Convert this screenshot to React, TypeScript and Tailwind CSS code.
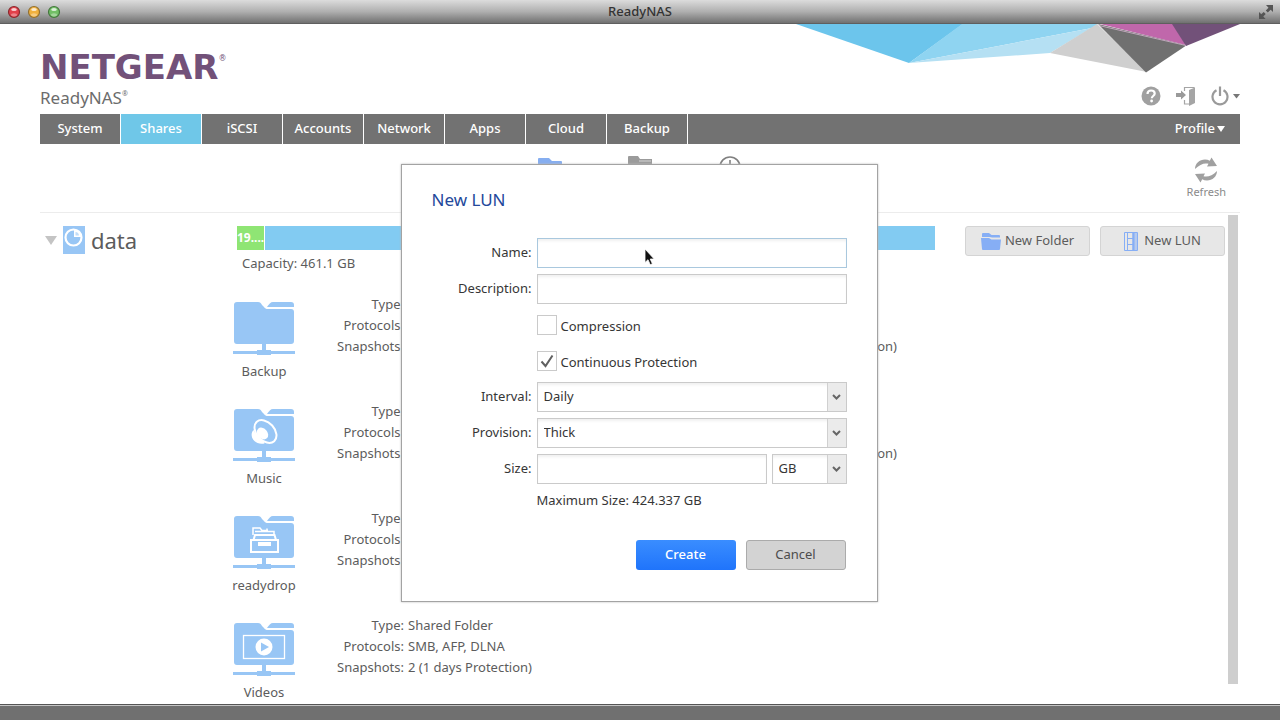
import React, { useState } from 'react';

type Share = {
  name?: string;
  kind: 'plain' | 'music' | 'drop' | 'video';
  type: string;
  protocols: string;
  snapshots: string;
};

const tabs = ['System', 'Shares', 'iSCSI', 'Accounts', 'Network', 'Apps', 'Cloud', 'Backup'];

// Filled row by row, null keeps the cell empty
const shares: (Share | null)[] = [
  { name: 'Backup', kind: 'plain', type: 'Shared Folder', protocols: 'SMB, AFP', snapshots: 'None' },
  { kind: 'plain', type: 'Shared Folder', protocols: 'SMB, AFP', snapshots: '2 (1 days Protection)' },
  { name: 'Music', kind: 'music', type: 'Shared Folder', protocols: 'SMB', snapshots: 'None' },
  { kind: 'plain', type: 'Shared Folder', protocols: 'SMB, AFP', snapshots: '2 (1 days Protection)' },
  { name: 'readydrop', kind: 'drop', type: 'Shared Folder', protocols: 'SMB, AFP', snapshots: 'None' },
  null,
  { name: 'Videos', kind: 'video', type: 'Shared Folder', protocols: 'SMB, AFP, DLNA', snapshots: '2 (1 days Protection)' },
];

function TrafficLight({ color, rim }: { color: string; rim: string }) {
  return (
    <svg width="14" height="14" viewBox="0 0 14 14">
      <circle cx="7" cy="7" r="5.5" fill={color} stroke={rim} strokeWidth="1.2" />
      <ellipse cx="7" cy="4.4" rx="2.8" ry="1.5" fill="#fff" opacity="0.75" />
      <ellipse cx="7" cy="9.8" rx="3" ry="1.6" fill="#fff" opacity="0.35" />
    </svg>
  );
}

function Banner() {
  return (
    <svg className="absolute top-0 right-10" width="444" height="49" viewBox="796 24 444 49">
      <polygon points="796,24 963,24 909,63" fill="#6cc5ec" />
      <polygon points="962,24 1098,24 1092,28 909,63" fill="#8fd4f1" />
      <polygon points="909,63 1092,28 1098,24 1050,53" fill="#b5e0f3" />
      <polygon points="1097,24 1050,53 1147,72" fill="#cfcfcf" />
      <polygon points="1098,24 1187,45 1146,72.5" fill="#707070" />
      <polygon points="1100,24 1173,24 1186,45" fill="#c067ab" />
      <polygon points="1172,24 1240,24 1186,46" fill="#725179" />
      <path d="M1099 25.500L1186 45.500" stroke="#e3bfdc" strokeWidth="0.700" />
    </svg>
  );
}

function ShareIcon({ kind }: { kind: Share['kind'] }) {
  return (
    <svg width="62" height="53" viewBox="0 0 62 53">
      <path d="M4 0h21c2 0 3 1 4 3l2 2c1 1.500 2 2 4 2h23a3 3 0 0 1 3 3v29a3 3 0 0 1-3 3H4a3 3 0 0 1-3-3V3a3 3 0 0 1 3-3z" fill="#98c6f5" />
      <path d="M34 5c2-3 3.500-5 6-5h18c2 0 3 1 3 3v2z" fill="#98c6f5" />
      <path d="M29 42h4v6h5v1h24v3H38v1H24v-1H0v-3h24v-1h5z" fill="#98c6f5" />
      {kind === 'music' && (
        <g>
          <path d="M20.500 21c-2.500 2.500-2.500 7 0 10 3 3.500 7 4.500 11 3.500l-1-3-8-7z" fill="#fff" />
          <ellipse cx="32.500" cy="22.500" rx="9" ry="13" transform="rotate(-42 32.500 22.500)" fill="#98c6f5" stroke="#fff" strokeWidth="2" />
          <ellipse cx="29.500" cy="24.500" rx="5" ry="6.500" transform="rotate(-42 29.500 24.500)" fill="#fff" />
        </g>
      )}
      {kind === 'drop' && (
        <g fill="none" stroke="#fff" strokeWidth="2">
          <path d="M18 24h27v12H18zM20.500 24l1.500-5h19.500l1.500 5" />
          <path d="M20 19v-7h7l2 2.500h6M22 15.500h19v3.500M34 12.500v2.500" strokeWidth="1.500" />
          <path d="M25 28h13" strokeWidth="4" />
        </g>
      )}
      {kind === 'video' && (
        <g>
          <rect x="10.500" y="12.500" width="41" height="23" fill="none" stroke="#fff" strokeWidth="1.300" />
          <circle cx="31" cy="24" r="8.500" fill="#fff" />
          <path d="M28 19.500l8 4.500-8 4.500z" fill="#98c6f5" />
        </g>
      )}
    </svg>
  );
}

function ShareItem({ share }: { share: Share }) {
  return (
    <li className="flex items-start">
      <div className="w-20 pt-2 flex flex-col items-center gap-1.5">
        <ShareIcon kind={share.kind} />
        {share.name && <span className="leading-5">{share.name}</span>}
      </div>
      <dl className="grid grid-cols-[100px_auto] gap-x-1 leading-[21px] whitespace-nowrap">
        <dt className="text-right">Type:</dt>
        <dd>{share.type}</dd>
        <dt className="text-right">Protocols:</dt>
        <dd>{share.protocols}</dd>
        <dt className="text-right">Snapshots:</dt>
        <dd>{share.snapshots}</dd>
      </dl>
    </li>
  );
}

const fieldClass =
  'h-[30px] w-full min-w-0 border border-[#cacaca] bg-white px-1.5 shadow-[inset_0_3px_3px_-1px_#f0f0f0] focus:outline-none';

function SelectBox({ id, label, options }: { id: string; label?: string; options: string[] }) {
  return (
    <div className="relative w-full">
      <select id={id} aria-label={label} className={`${fieldClass} appearance-none`}>
        {options.map((option) => (
          <option key={option}>{option}</option>
        ))}
      </select>
      <span className="absolute inset-y-px right-px w-[19px] border-l border-[#d0d0d0] bg-[#ebebeb] flex items-center justify-center pointer-events-none">
        <svg width="9" height="6" viewBox="0 0 9 6">
          <path d="M1 1l3.500 3.500L8 1" fill="none" stroke="#666" strokeWidth="2" />
        </svg>
      </span>
    </div>
  );
}

function CheckRow({ id, label, checked, onChange }: { id: string; label: string; checked: boolean; onChange: (v: boolean) => void }) {
  return (
    <div className="col-start-2 h-[30px] flex items-center gap-1">
      <span className="relative size-5">
        <input
          id={id}
          type="checkbox"
          checked={checked}
          onChange={(e) => onChange(e.target.checked)}
          className="block size-5 appearance-none border border-[#cacaca] bg-white"
        />
        {checked && (
          <svg className="absolute inset-0 pointer-events-none" width="20" height="20" viewBox="0 0 20 20">
            <path d="M4.500 10.500l4 4.500L15.500 4.500" fill="none" stroke="#606060" strokeWidth="2" />
          </svg>
        )}
      </span>
      <label htmlFor={id} className="pt-[3px]">{label}</label>
    </div>
  );
}

function NewLunDialog() {
  const [name, setName] = useState('');
  const [description, setDescription] = useState('');
  const [size, setSize] = useState('');
  const [compression, setCompression] = useState(false);
  const [protection, setProtection] = useState(true);

  return (
    <div className="absolute inset-x-0 top-[140px] flex justify-center pr-0.5">
      <form
        role="dialog"
        aria-labelledby="lun-title"
        onSubmit={(e) => e.preventDefault()}
        className="w-[477px] border border-[#a3a3a3] bg-white px-[30px] pt-[23px] pb-[31px] shadow-[0_0_2px_#bbb] text-[13px] text-[#363636]"
      >
        <h2 id="lun-title" className="text-[17px] leading-6 text-[#24489b]">New LUN</h2>

        <div className="mt-[26px] grid grid-cols-[100px_1fr] items-center gap-x-[5px] gap-y-1.5">
          <label htmlFor="name" className="text-right">Name:</label>
          <div className="relative">
            <input
              id="name"
              value={name}
              onChange={(e) => setName(e.target.value)}
              className="h-[30px] w-full border border-[#a9c8de] bg-white px-1.5 shadow-[inset_0_3px_3px_-1px_#f0f0f0] focus:outline-none"
            />
            {/* Mouse pointer */}
            <svg className="absolute left-[107px] top-2.5 pointer-events-none" width="12" height="19" viewBox="0 0 12 19">
              <path d="M1 1v13.500l3-2.800 2.200 5 2.200-1-2.200-4.700h4z" fill="#111" stroke="#fff" strokeWidth="0.800" />
            </svg>
          </div>

          <label htmlFor="description" className="text-right">Description:</label>
          <input id="description" value={description} onChange={(e) => setDescription(e.target.value)} className={fieldClass} />

          <CheckRow id="compression" label="Compression" checked={compression} onChange={setCompression} />
          <CheckRow id="protection" label="Continuous Protection" checked={protection} onChange={setProtection} />

          <label htmlFor="interval" className="text-right">Interval:</label>
          <SelectBox id="interval" options={['Daily', 'Hourly', 'Weekly']} />

          <label htmlFor="provision" className="text-right">Provision:</label>
          <SelectBox id="provision" options={['Thick', 'Thin']} />

          <label htmlFor="size" className="text-right">Size:</label>
          <div className="grid grid-cols-[1fr_75px] gap-[5px]">
            <input id="size" value={size} onChange={(e) => setSize(e.target.value)} className={fieldClass} />
            <SelectBox id="unit" label="Unit" options={['GB', 'MB', 'TB']} />
          </div>

          <p className="col-start-2 leading-5">Maximum Size: 424.337 GB</p>
        </div>

        <div className="mt-[30px] pr-px flex justify-end gap-2.5">
          <button type="submit" className="h-[30px] w-[100px] rounded-[3px] bg-gradient-to-b from-[#3a8dff] to-[#1f74fb] font-medium text-white">
            Create
          </button>
          <button type="button" className="h-[30px] w-[100px] rounded-[3px] border border-[#ababab] bg-[#d3d3d3] text-[#4c4c4c]">
            Cancel
          </button>
        </div>
      </form>
    </div>
  );
}

export default function App() {
  const [activeTab, setActiveTab] = useState('Shares');

  return (
    <div className="h-screen flex flex-col overflow-hidden bg-white font-['Noto_Sans',sans-serif] text-[13px] text-[#5c5c5c]">
      {/* Window title bar */}
      <div className="h-6 shrink-0 grid grid-cols-[1fr_auto_1fr] items-center px-[7px] bg-gradient-to-b from-[#dcdcdc] via-[#b0b0b0] to-[#717171] border-b border-[#5f5f5f]">
        <div className="flex gap-1.5">
          <TrafficLight color="#e2414a" rim="#8a2a2e" />
          <TrafficLight color="#f0b13f" rim="#93702f" />
          <TrafficLight color="#72bf66" rim="#44763d" />
        </div>
        <span className="font-medium text-[#333]">ReadyNAS</span>
        <svg className="justify-self-end" width="14" height="14" viewBox="0 0 14 14" fill="#555">
          <path d="M7 0h7v7l-2.300-2.300-2.900 2.900-2-2 2.700-2.900zM0 7l2.300 2.300 2.400-2.400 2 2-2.400 2.500L6.600 14H0z" />
        </svg>
      </div>

      <main className="relative flex-1 min-h-0 px-10 flex flex-col">
        <Banner />

        <header className="h-[90px] shrink-0 flex justify-between items-end">
          <div className="pb-1.5 flex flex-col gap-[3px]">
            <h1 className="flex items-start font-['DejaVu_Sans',sans-serif] text-[34px] leading-9 font-bold text-[#725179]">
              NETGEAR<sup className="text-[8px] leading-5 top-0 font-normal">®</sup>
            </h1>
            <p className="flex items-start text-[17px] leading-5 text-[#6c6c6c]">
              ReadyNAS<sup className="text-[7px] leading-3 top-0">®</sup>
            </p>
          </div>
          <div className="flex items-center gap-[15px] pb-2 text-[#8f8f8f]">
            <button aria-label="Help">
              <svg width="20" height="20" viewBox="0 0 20 20">
                <circle cx="10" cy="10" r="9.500" fill="#a0a0a0" />
                <path d="M6.500 8c0-2.200 1.500-3.500 3.600-3.500 2.100 0 3.600 1.200 3.600 3 0 2.500-2.900 2.500-2.900 4.700" fill="none" stroke="#fff" strokeWidth="2.200" />
                <circle cx="10.600" cy="15" r="1.400" fill="#fff" />
              </svg>
            </button>
            <button aria-label="Log out">
              <svg width="20" height="20" viewBox="0 0 20 20">
                <path d="M0 7h5V4.500l5 4.500-5 4.500V11H0z" fill="#9a9a9a" />
                <path d="M8.500 5V1.500h10M8.500 14v4H13" fill="none" stroke="#a5a5a5" strokeWidth="1.200" />
                <path d="M13 4l6-2.500v15.500l-6 3z" fill="#a5a5a5" />
              </svg>
            </button>
            <button aria-label="Power" className="flex items-center gap-1">
              <svg width="18" height="20" viewBox="0 0 18 20" fill="none" stroke="#9a9a9a" strokeWidth="2.200">
                <path d="M5.500 4.200a7.500 7.500 0 1 0 7 0M9 0.500v9.500" />
              </svg>
              <svg width="7" height="5" viewBox="0 0 7 5" fill="#777">
                <path d="M0 0h7L3.500 4.500z" />
              </svg>
            </button>
          </div>
        </header>

        <nav className="h-[30px] shrink-0 flex bg-[#727272] font-medium text-white">
          {tabs.map((tab) => (
            <button
              key={tab}
              onClick={() => setActiveTab(tab)}
              className={`w-[81px] border-r border-white ${tab === activeTab ? 'bg-[#6fc7e8]' : ''}`}
            >
              {tab}
            </button>
          ))}
          <button className="ml-auto mr-[15px] flex items-center gap-0.5">
            Profile
            <svg width="8" height="6" viewBox="0 0 8 6" fill="#fff">
              <path d="M0 0h8L4 6z" />
            </svg>
          </button>
        </nav>

        {/* Toolbar */}
        <div className="h-[69px] shrink-0 grid grid-cols-[1fr_auto_1fr] items-start pt-3 border-b border-[#ececec]">
          <div className="col-start-2 flex">
            <button aria-label="New folder" className="w-[90px] flex justify-center">
              <svg width="24" height="20" viewBox="0 0 24 20" fill="#86aef0">
                <path d="M0 3a1 1 0 0 1 1-1h10l3 3h9a1 1 0 0 1 1 1v13H0z" />
              </svg>
            </button>
            <button aria-label="Share settings" className="w-[90px] flex justify-center">
              <svg width="24" height="20" viewBox="0 0 24 20" fill="#9b9b9b">
                <path d="M0 1a1 1 0 0 1 1-1h9l2 3h12v16H0z" />
                <path d="M11 5h12" stroke="#d5d5d5" />
              </svg>
            </button>
            <button aria-label="Snapshots" className="w-[90px] flex justify-center">
              <svg width="22" height="22" viewBox="0 0 22 22" fill="none" stroke="#808080" strokeWidth="1.600">
                <circle cx="11" cy="11" r="10" />
                <path d="M11 4v8h5" />
              </svg>
            </button>
          </div>
          <button className="justify-self-end mr-3.5 flex flex-col items-center text-[11px] leading-4 text-[#8a8a8a]">
            <svg width="24" height="28" viewBox="0 0 24 28" fill="#a0a0a0">
              <path d="M1 13C1 7.500 5.500 3.500 11 3.500c1.800 0 3.400.4 4.800 1.200L17.500 1.500 23 10l-10 .5 1.500-2.700C10.500 6.500 5.500 8.500 1 13z" />
              <path d="M23 15c0 5.500-4.500 9.500-10 9.500-1.800 0-3.400-.4-4.800-1.200L6.500 26.500 1 18l10-.5-1.500 2.700c4 1.300 9-.7 13.500-5.200z" />
            </svg>
            Refresh
          </button>
        </div>

        <div className="flex-1 min-h-0 flex gap-[3px] pr-0.5">
          <section className="flex-1 min-w-0 overflow-hidden pt-[13px]">
            <div className="flex items-start">
              <div className="w-[197px] shrink-0 pl-[5px] flex items-center gap-1.5 text-[#5c5c5c]">
                <svg width="12" height="9" viewBox="0 0 12 9" fill="#c4c4c4">
                  <path d="M0 0h12L6 9z" />
                </svg>
                <svg width="22" height="28" viewBox="0 0 22 28">
                  <path d="M0 0h22v28H0z" fill="#98c6f5" />
                  <circle cx="10.500" cy="11.500" r="8" fill="none" stroke="#fff" strokeWidth="2.200" />
                  <path d="M11 11V4a7.500 7.500 0 0 1 7.500 7z" fill="#fff" />
                  <path d="M12.500 9.500V6a4 4 0 0 1 3.500 3.500z" fill="#98c6f5" opacity="0.600" />
                </svg>
                <h2 className="text-[22px] leading-6">data</h2>
              </div>
              <div className="flex-1 min-w-0">
                <div className="h-6 flex gap-px text-xs leading-6 font-bold text-white">
                  <div className="w-[27px] bg-[#8fe574] overflow-hidden">19....</div>
                  <div className="flex-1 bg-[#82cbf2]" />
                </div>
                <p className="pl-[5px] pt-[3px] leading-5">Capacity: 461.1 GB</p>
              </div>
              <div className="ml-[30px] flex gap-2.5">
                <button className="h-[30px] w-[125px] flex items-center justify-center gap-1 rounded-[3px] border border-[#d4d4d4] bg-[#e7e7e7]">
                  <svg width="20" height="17" viewBox="0 0 20 17" fill="#86aef5">
                    <path d="M1 4V1a1 1 0 0 1 1-1h6l2.500 2H18a1 1 0 0 1 1 1v1.500h-8L8.500 4z" />
                    <path d="M0 5h8l2.500 1.500H20L19 16a1 1 0 0 1-1 1H2a1 1 0 0 1-1-1z" />
                  </svg>
                  New Folder
                </button>
                <button className="h-[30px] w-[125px] flex items-center justify-center gap-1.5 rounded-[3px] border border-[#d4d4d4] bg-[#e7e7e7]">
                  <svg width="14" height="19" viewBox="0 0 14 19" fill="none" stroke="#86aef5">
                    <path d="M.5.500h13v18H.5zM3.500.500v18M3.500 6.500h6M3.500 12.500h6M12 .5v18" />
                    <path d="M9.500.500v18" strokeWidth="2.500" />
                  </svg>
                  New LUN
                </button>
              </div>
            </div>

            <ul className="mt-[21px] pl-[184px] grid grid-cols-[365px_365px] gap-y-5">
              {shares.map((share, i) => (
                share ? <ShareItem key={i} share={share} /> : <li key={i} />
              ))}
            </ul>
          </section>
          {/* Scrollbar */}
          <div className="w-2.5 shrink-0 mt-0.5 mb-5 bg-[#cecece]" />
        </div>

        <NewLunDialog />
      </main>

      <footer className="h-4 shrink-0 border-t border-[#555] bg-[#707070] shadow-[inset_0_1px_0_#c4c4c4]" />
    </div>
  );
}
